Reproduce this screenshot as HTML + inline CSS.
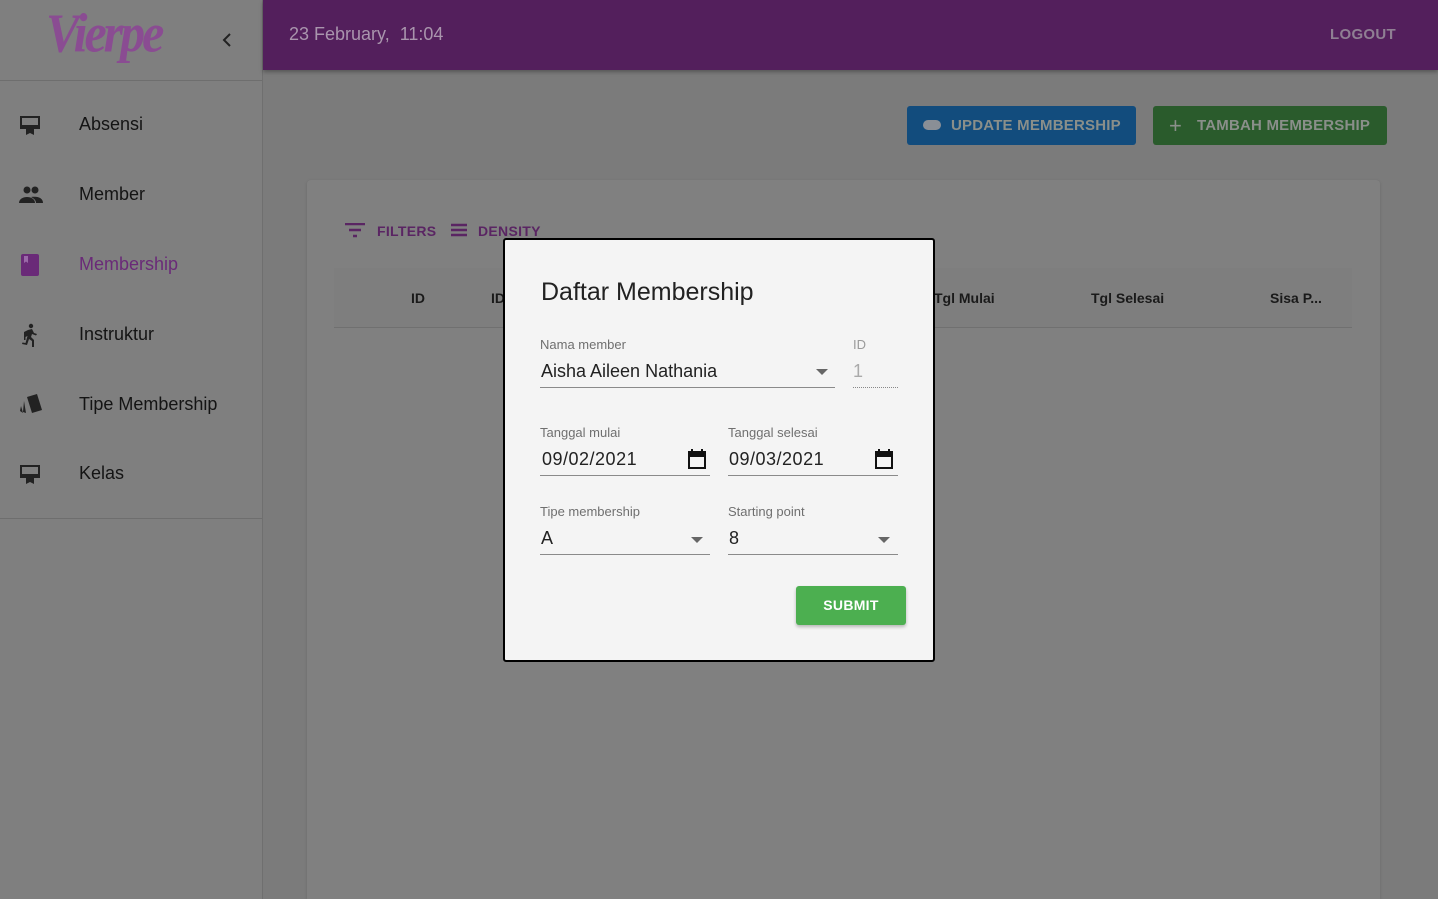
<!DOCTYPE html>
<html><head><meta charset="utf-8"><style>
*{box-sizing:border-box;margin:0;padding:0}
html,body{width:1438px;height:899px;overflow:hidden}
body{background:#7b7b7b;font-family:"Liberation Sans",Roboto,sans-serif;position:relative}
.side{position:absolute;left:0;top:0;width:263px;height:899px;background:#7f7f7f;border-right:1px solid #6f6f6f}
.logo{position:absolute;left:46px;top:4px;font-family:"Liberation Serif",serif;font-style:italic;font-weight:bold;font-size:50px;color:#8a4c92;letter-spacing:-3px;transform:scaleY(1.1)}
.chev{position:absolute;left:220px;top:30px}
.sep{position:absolute;left:0;width:262px;height:1px;background:#6e6e6e}
.item{position:absolute;left:0;width:262px;height:70px}
.item svg{position:absolute;left:18px;top:23px}
.item span{position:absolute;left:79px;top:24px;font-size:18px;color:#141414}
.hdr{position:absolute;left:263px;top:0;width:1175px;height:70px;background:#531f5c;box-shadow:0 2px 4px rgba(0,0,0,.3)}
.hdr .d{position:absolute;left:26px;top:24px;font-size:18px;color:#a995ad}
.hdr .l{position:absolute;right:42px;top:26px;font-size:15px;font-weight:bold;color:#8f7f93;letter-spacing:.3px}
.btn{position:absolute;top:106px;height:39px;border-radius:3px;font-size:15px;font-weight:bold;color:#8a8f8a;letter-spacing:.2px;line-height:39px}
.card{position:absolute;left:307px;top:180px;width:1073px;height:719px;background:#808080;border-radius:4px 4px 0 0;box-shadow:0 1px 3px rgba(0,0,0,.15)}
.tb{position:absolute;font-size:14px;font-weight:bold;color:#5a2563;letter-spacing:.3px}
.th{position:absolute;left:334px;top:268px;width:1018px;height:60px;background:#7e7e7e;border-bottom:1px solid #707070}
.th span{position:absolute;top:22px;font-size:14px;font-weight:bold;color:#1a1a1a}
.dlg{position:absolute;left:503px;top:238px;width:432px;height:424px;background:#f4f4f4;border:2px solid #000;border-radius:3px}
.dlg h2{position:absolute;left:36px;top:38px;font-weight:normal;font-size:25px;color:#222}
.lab{position:absolute;font-size:13px;color:#6f6f6f}
.val{position:absolute;font-size:18px;color:#222}
.ln{position:absolute;height:1px;background:#8a8a8a}
.arr{position:absolute;width:0;height:0;border-left:6px solid transparent;border-right:6px solid transparent;border-top:6px solid #666}
</style></head><body>
<div class="side">
<div class="logo">Vierpe</div>
<svg class="chev" width="14" height="20" viewBox="0 0 14 20"><path d="M10 4 L4 10 L10 16" stroke="#222" stroke-width="2" fill="none"/></svg>
<div class="sep" style="top:80px"></div>
<div class="item" style="top:90px"><svg width="24" height="24" viewBox="0 0 24 24"><path d="M2 3h20v13H2z M4 5v7h16V5z M2 14h20 M8 16h8v6l-4-2-4 2z" fill="#222" fill-rule="evenodd"/></svg><span>Absensi</span></div>
<div class="item" style="top:160px"><svg width="26" height="24" viewBox="0 0 26 24"><circle cx="9" cy="7" r="3.5" fill="#222"/><circle cx="17" cy="7" r="3.5" fill="#222"/><path d="M1 20c0-4 4-6 8-6s8 2 8 6z M13 14c1-.3 2.5-.3 4-.3 4 0 8 2 8 6.3h-7c0-2-1-4-5-6z" fill="#222"/></svg><span>Member</span></div>
<div class="item" style="top:230px"><svg width="24" height="24" viewBox="0 0 24 24"><rect x="3" y="1" width="18" height="22" rx="2" fill="#6a2a78"/><path d="M6 3h4v7l-2-1.5L6 10z" fill="#9a6aa8"/></svg><span style="color:#6a2a78">Membership</span></div>
<div class="item" style="top:300px"><svg width="24" height="26" viewBox="0 0 24 26"><circle cx="13" cy="3" r="2.2" fill="#222"/><path d="M10 7l4-1 2 4 3 1-1 1.5-4-1.5-1 3 3 3v7h-2v-6l-3-2-2 6-5-1 .5-1.5 3 .5 2-7-2 1v3H6V9z" fill="#222"/></svg><span>Instruktur</span></div>
<div class="item" style="top:370px"><svg width="26" height="24" viewBox="0 0 26 24"><path d="M9 4l10-3 5 16-10 3z" fill="#222"/><path d="M6 8l2 12-3-1zM3 13l2 7-3-2z" fill="#222"/></svg><span>Tipe Membership</span></div>
<div class="item" style="top:439px"><svg width="24" height="24" viewBox="0 0 24 24"><path d="M2 3h20v13H2z M4 5v7h16V5z M8 16h8v6l-4-2-4 2z" fill="#222" fill-rule="evenodd"/></svg><span>Kelas</span></div>
<div class="sep" style="top:518px"></div>
</div>
<div class="hdr"><div class="d">23 February,&nbsp; 11:04</div><div class="l">LOGOUT</div></div>
<div class="btn" style="left:907px;width:229px;background:#124c7d"><span style="position:absolute;left:16px;top:14px;width:18px;height:10px;border-radius:5px;background:#8a8f96"></span><span style="position:absolute;left:44px">UPDATE MEMBERSHIP</span></div>
<div class="btn" style="left:1153px;width:234px;background:#2a5b2c"><span style="position:absolute;left:16px;font-size:22px;font-weight:normal">+</span><span style="position:absolute;left:44px">TAMBAH MEMBERSHIP</span></div>
<div class="card"></div>
<svg style="position:absolute;left:345px;top:223px" width="20" height="15" viewBox="0 0 20 15"><path d="M0 1h20M4 7h12M8 13h4" stroke="#5a2563" stroke-width="2.4"/></svg>
<div class="tb" style="left:377px;top:223px">FILTERS</div>
<svg style="position:absolute;left:451px;top:223px" width="16" height="14" viewBox="0 0 16 14"><path d="M0 2h16M0 7h16M0 12h16" stroke="#5a2563" stroke-width="2.4"/></svg>
<div class="tb" style="left:478px;top:223px">DENSITY</div>
<div class="th"><span style="left:77px">ID</span><span style="left:157px">ID</span><span style="left:600px">Tgl Mulai</span><span style="left:757px">Tgl Selesai</span><span style="left:936px">Sisa P...</span></div>
<div class="dlg">
<h2>Daftar Membership</h2>
<div class="lab" style="left:35px;top:97px">Nama member</div>
<div class="val" style="left:36px;top:121px">Aisha Aileen Nathania</div>
<div class="arr" style="left:311px;top:129px"></div>
<div class="ln" style="left:35px;top:147px;width:295px"></div>
<div class="lab" style="left:348px;top:97px;color:#9a9a9a">ID</div>
<div class="val" style="left:348px;top:121px;color:#aaa">1</div>
<div style="position:absolute;left:348px;top:147px;width:45px;border-top:1px dotted #888"></div>
<div class="lab" style="left:35px;top:185px">Tanggal mulai</div>
<div class="val" style="left:37px;top:209px;letter-spacing:.5px">09/02/2021</div>
<svg style="position:absolute;left:183px;top:209px" width="18" height="20" viewBox="0 0 18 20"><path d="M1 3h16v16H1z" fill="none" stroke="#111" stroke-width="2"/><path d="M1 3h16v4H1zM4 0v4M14 0v4" stroke="#111" stroke-width="2" fill="#111"/></svg>
<div class="ln" style="left:35px;top:235px;width:170px"></div>
<div class="lab" style="left:223px;top:185px">Tanggal selesai</div>
<div class="val" style="left:224px;top:209px;letter-spacing:.5px">09/03/2021</div>
<svg style="position:absolute;left:370px;top:209px" width="18" height="20" viewBox="0 0 18 20"><path d="M1 3h16v16H1z" fill="none" stroke="#111" stroke-width="2"/><path d="M1 3h16v4H1zM4 0v4M14 0v4" stroke="#111" stroke-width="2" fill="#111"/></svg>
<div class="ln" style="left:223px;top:235px;width:170px"></div>
<div class="lab" style="left:35px;top:264px">Tipe membership</div>
<div class="val" style="left:36px;top:288px">A</div>
<div class="arr" style="left:186px;top:297px"></div>
<div class="ln" style="left:35px;top:314px;width:170px"></div>
<div class="lab" style="left:223px;top:264px">Starting point</div>
<div class="val" style="left:224px;top:288px">8</div>
<div class="arr" style="left:373px;top:297px"></div>
<div class="ln" style="left:223px;top:314px;width:170px"></div>
<div style="position:absolute;left:291px;top:346px;width:110px;height:39px;background:#4caf50;border-radius:3px;box-shadow:0 2px 3px rgba(0,0,0,.25);color:#fff;font-weight:bold;font-size:14px;text-align:center;line-height:39px;letter-spacing:.3px">SUBMIT</div>
</div>
</body></html>
